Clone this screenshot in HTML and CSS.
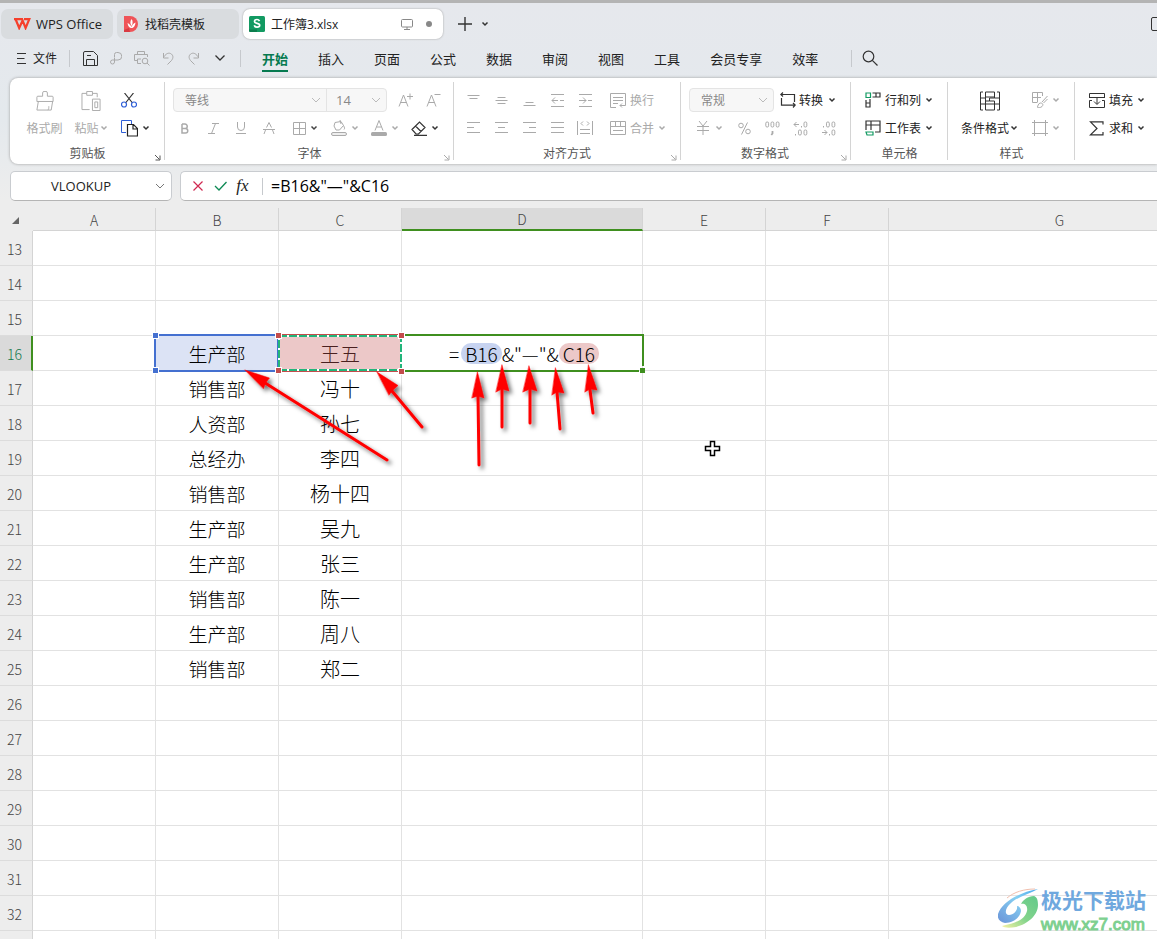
FILE: index.html
```
<!DOCTYPE html>
<html lang="zh-CN">
<head>
<meta charset="utf-8">
<title>工作簿3.xlsx - WPS Office</title>
<link rel="stylesheet" href="styles.css">
</head>
<body>
<svg class="defs" aria-hidden="true">
  <symbol id="caret" viewBox="0 0 8 6"><path d="M1.500 1.500 4 4l2.500-2.500" fill="none" stroke="currentColor" stroke-width="1.500"/></symbol>
  <symbol id="chev" viewBox="0 0 10 6"><path d="M1 1l4 4 4-4" fill="none" stroke="currentColor"/></symbol>
  <symbol id="corner" viewBox="0 0 7 7"><path d="M1 1l4.500 4.500M6 1.500V6H1.500" fill="none" stroke="currentColor"/></symbol>
</svg>

<header class="tabs">
  <button class="tab tab-home">
    <svg width="17" height="12" viewBox="0 0 17 12"><path d="M0 1.200h9M1.500 1l3.700 9L8.600 2.500 11.600 10 15.300 1.200H10" fill="none" stroke="#f5402c" stroke-width="2.200"/></svg>
    WPS Office
  </button>
  <button class="tab tab-store">
    <svg width="14" height="16" viewBox="0 0 14 16"><path d="M0 0h6a8 8 0 0 1 0 16H0z" fill="#ef5458"/><path d="M0 14l5-2 1 4H0z" fill="#d93a42"/><path d="M7.500 3c1.500 2 1.500 4.500 0 7C6 8 6 5 7.500 3z" fill="#fff"/><path d="M3.500 7c2 1 3 2 4 4 .8-2.500 2-3.500 4-4.500-.5 4-2 5.500-4 5.500S4 10.500 3.500 7z" fill="#fff"/></svg>
    找稻壳模板
  </button>
  <button class="tab tab-file">
    <svg width="16" height="16" viewBox="0 0 16 16"><rect width="16" height="16" rx="1.500" fill="#129a62"/><path d="M0 13.500h8V16H1.500A1.500 1.500 0 0 1 0 14.500z" fill="#0b7d4d"/><path d="M10.500 5.200C10 4 9.200 3.500 8 3.500c-1.500 0-2.500.7-2.500 1.900C5.500 8 10.700 6.700 10.700 9.300c0 1.200-1.100 1.900-2.600 1.900S5.600 10.500 5.300 9.300" fill="none" stroke="#fff" stroke-width="1.700"/></svg>
    <span class="file-name">工作簿3.xlsx</span>
    <svg width="12" height="11" viewBox="0 0 12 11" fill="none" stroke="#888"><rect x=".5" y=".5" width="11" height="7.500" rx="1"/><path d="M6 8v2M3 10.500h6"/></svg>
    <i class="dot"></i>
  </button>
  <button class="ic add" aria-label="新建"><svg width="14" height="14" viewBox="0 0 14 14"><path d="M7 0v14M0 7h14" stroke="#333" stroke-width="1.400"/></svg></button>
  <button class="ic" aria-label="标签列表"><svg class="caret"><use href="#caret"/></svg></button>
  <button class="ic edge" aria-label="窗口"><svg width="14" height="14" viewBox="0 0 14 14"><rect x=".5" y=".5" width="13" height="13" rx="1.500" fill="none" stroke="#333"/></svg></button>
</header>

<nav class="menu">
  <button class="file-btn"><svg width="9" height="11" viewBox="0 0 9 11"><path d="M0 .5h9M0 5.500h7.500M0 10.500h9" stroke="#333"/></svg>文件</button>
  <i class="sep"></i>
  <div class="quick">
    <button class="ic" aria-label="保存"><svg width="15" height="15" viewBox="0 0 15 15" fill="none" stroke="#333"><path d="M2 .5h8.500l4 4v10H.5V2A1.500 1.500 0 0 1 2 .5zM3.500 14.500v-6h8v6M4 4.500h4"/></svg></button>
    <button class="ic off" aria-label="输出"><svg width="12" height="13" viewBox="0 0 12 13" fill="none" stroke="currentColor"><path d="M4.500 5V2.500a2 2 0 0 1 2-2H8a3.500 3.500 0 0 1 0 7.500H2.500a2 2 0 1 0 2 2V5.500"/></svg></button>
    <button class="ic off" aria-label="打印预览"><svg width="16" height="15" viewBox="0 0 16 15" fill="none" stroke="currentColor"><path d="M3.500 3.500v-3h7v3M3.500 9.500h-3v-6h13V6M7 12.500H3.500V8H7"/><circle cx="11" cy="10" r="2.800"/><path d="M13 12l2.500 2.500"/></svg></button>
    <button class="ic off" aria-label="撤销"><svg width="12" height="13" viewBox="0 0 12 13" fill="none" stroke="currentColor"><path d="M1.500 1v5h5M1.500 5.500C3.500 2 6 .5 8.500 1.500c3 1.500 3 4.500 1 7L5.500 12.500"/></svg></button>
    <button class="ic off" aria-label="恢复"><svg width="12" height="13" viewBox="0 0 12 13" fill="none" stroke="currentColor"><path d="M10.500 1v5h-5M10.500 5.500C8.500 2 6 .5 3.500 1.500c-3 1.500-3 4.500-1 7l4 4"/></svg></button>
    <button class="ic" aria-label="更多"><svg width="10" height="6" viewBox="0 0 10 6"><path d="M.5.500 5 5 9.500.500" fill="none" stroke="#333" stroke-width="1.300"/></svg></button>
  </div>
  <i class="sep"></i>
  <div class="menu-items">
    <a class="active" href="#">开始</a><a href="#">插入</a><a href="#">页面</a><a href="#">公式</a><a href="#">数据</a><a href="#">审阅</a><a href="#">视图</a><a href="#">工具</a><a href="#">会员专享</a><a href="#">效率</a>
  </div>
  <i class="sep"></i>
  <button class="ic search" aria-label="搜索"><svg width="16" height="16" viewBox="0 0 16 16" fill="none" stroke="#333" stroke-width="1.200"><circle cx="6.500" cy="6.500" r="5.300"/><path d="M10.300 10.300 15.500 15.500"/></svg></button>
</nav>

<section class="ribbon">
  <div class="group g-clip">
    <div class="tools">
      <button class="big off"><svg width="20" height="21" viewBox="0 0 20 21" fill="none" stroke="currentColor"><path d="M1.500 11V6.500a1 1 0 0 1 1-1h5V2a1.500 1.500 0 0 1 1.500-1.500h2A1.500 1.500 0 0 1 12.500 2v3.500h5a1 1 0 0 1 1 1V11zM3 11l-1.500 9h15l1.500-9M13 20c1-1 1-2 1-4"/></svg><span>格式刷</span></button>
      <button class="big off"><svg width="21" height="21" viewBox="0 0 21 21" fill="none" stroke="currentColor"><path d="M5.500 2.500h-5v17h8M11.500 2.500h5v4M5.500.5h6v4h-6zM11.500 8.500h8v12h-8zM14 11.500h3v6h-3z"/></svg><span>粘贴<svg class="caret"><use href="#caret"/></svg></span></button>
      <div class="col">
        <button class="tool" aria-label="剪切"><svg width="16" height="15" viewBox="0 0 16 15" fill="none"><path d="M3.500 0l8 10M12.500 0l-8 10" stroke="#333" stroke-width="1.200"/><circle cx="3" cy="11.500" r="2.500" stroke="#2f5fd8" stroke-width="1.200"/><circle cx="13" cy="11.500" r="2.500" stroke="#2f5fd8" stroke-width="1.200"/></svg></button>
        <button class="tool" aria-label="复制"><svg width="17" height="17" viewBox="0 0 17 17" fill="none"><path d="M5 12.500H.5V.5h10V4" stroke="#2f5fd8"/><path d="M6.500 4.500h6l4 4v7.500h-10zM12 5v4h4" stroke="#222" stroke-width="1.200"/></svg><svg class="caret"><use href="#caret"/></svg></button>
      </div>
    </div>
    <div class="label">剪贴板<svg class="corner"><use href="#corner"/></svg></div>
  </div>

  <div class="group g-font">
    <div class="row">
      <div class="combo">
        <label class="pick font-name"><select aria-label="字体"><option>等线</option></select><svg class="chev"><use href="#chev"/></svg></label>
        <label class="pick font-size"><select aria-label="字号"><option>14</option></select><svg class="chev"><use href="#chev"/></svg></label>
      </div>
      <button class="cell off" aria-label="增大字号"><svg width="15" height="14" viewBox="0 0 15 14" fill="none" stroke="currentColor"><path d="M1 13.500 5.500 2 10 13.500M2.500 9.500h6M9 3.500h6M12 .5v6"/></svg></button>
      <button class="cell off" aria-label="减小字号"><svg width="15" height="14" viewBox="0 0 15 14" fill="none" stroke="currentColor"><path d="M1 13.500 5.500 2 10 13.500M2.500 9.500h6M8.500 1.500h6"/></svg></button>
    </div>
    <div class="row">
      <button class="cell off" aria-label="加粗"><svg width="8" height="11" viewBox="0 0 8 11" fill="none" stroke="currentColor" stroke-width="1.500"><path d="M1 1v9h3.500a2.200 2.200 0 0 0 0-4.500H1M1 1h3a2.200 2.200 0 0 1 0 4.500"/></svg></button>
      <button class="cell off" aria-label="倾斜"><svg width="11" height="11" viewBox="0 0 11 11" fill="none" stroke="currentColor"><path d="M4 .5h7M0 10.500h7M7.500.500l-4 10"/></svg></button>
      <button class="cell off" aria-label="下划线"><svg width="10" height="12" viewBox="0 0 10 12" fill="none" stroke="currentColor"><path d="M1.500 0v5a3.500 3.500 0 0 0 7 0V0M0 11.500h10"/></svg></button>
      <button class="cell off" aria-label="删除线"><svg width="12" height="12" viewBox="0 0 12 12" fill="none" stroke="currentColor"><path d="M0 7.500h12M3.500 5.500 6 .5l2.500 5M2.500 8 1 12M9.500 8l1.500 4"/></svg></button>
      <button class="wide off" aria-label="边框"><svg width="13" height="13" viewBox="0 0 13 13" fill="none" stroke="currentColor"><path d="M.5.5h12v12H.5zM6.500 0v13M0 6.500h13"/></svg><svg class="caret dark"><use href="#caret"/></svg></button>
      <button class="wide off" aria-label="填充颜色"><svg width="16" height="16" viewBox="0 0 16 16" fill="none" stroke="currentColor"><path d="M4 2.500l6-1 2.500 4-4 4.500H5L3 6zM9 0l1 4M12.500 5.500c1 2 1.500 3 .5 4"/><rect x=".5" y="12.500" width="15" height="3" rx="1.500" fill="#eee"/></svg><svg class="caret"><use href="#caret"/></svg></button>
      <button class="wide off" aria-label="字体颜色"><svg width="16" height="16" viewBox="0 0 16 16" fill="none" stroke="currentColor"><path d="M4 10.500 8 .5l4 10M5.500 7h5"/><rect y="12" width="16" height="4" rx="1.500" fill="currentColor" stroke="none"/></svg><svg class="caret"><use href="#caret"/></svg></button>
      <button class="wide" aria-label="清除"><svg width="16" height="15" viewBox="0 0 16 15" fill="none" stroke="#333" stroke-width="1.200"><path d="M1 8.500 8.500 1 14 6.500 7.500 13H5zM4.500 5l5.500 5.500M3 14.300h13"/></svg><svg class="caret"><use href="#caret"/></svg></button>
    </div>
    <div class="label">字体<svg class="corner off"><use href="#corner"/></svg></div>
  </div>

  <div class="group g-align">
    <div class="row">
      <button class="cell off" aria-label="顶端对齐"><svg width="13" height="13" viewBox="0 0 13 13" stroke="currentColor"><path d="M.5 1.500h12M2.500 4.500h8"/></svg></button>
      <button class="cell off" aria-label="垂直居中"><svg width="13" height="13" viewBox="0 0 13 13" stroke="currentColor"><path d="M2.500 3.500h8M.5 6.500h12M2.500 9.500h8"/></svg></button>
      <button class="cell off" aria-label="底端对齐"><svg width="13" height="13" viewBox="0 0 13 13" stroke="currentColor"><path d="M2.500 8.500h8M.5 11.500h12"/></svg></button>
      <button class="cell off" aria-label="减少缩进"><svg width="13" height="13" viewBox="0 0 13 13" fill="none" stroke="currentColor"><path d="M0 .5h13M0 12.500h13M1 6.500h6M4 3.500l-3 3 3 3M9 6.500h4"/></svg></button>
      <button class="cell off" aria-label="增加缩进"><svg width="13" height="13" viewBox="0 0 13 13" fill="none" stroke="currentColor"><path d="M0 .5h13M0 12.500h13M0 6.500h7M4 3.500l3 3-3 3M9 6.500h4"/></svg></button>
      <button class="text off"><svg width="16" height="15" viewBox="0 0 16 15" fill="none" stroke="currentColor"><path d="M6 14.500H.5V.5h15V9M3 4.500h10M3 7.500h10M3 10.500h5M15.500 9v3.500H10M12 10.500l-2 2 2 2"/></svg>换行</button>
    </div>
    <div class="row">
      <button class="cell off" aria-label="左对齐"><svg width="13" height="12" viewBox="0 0 13 12" stroke="currentColor"><path d="M0 .5h13M0 5.500h7M0 10.500h13"/></svg></button>
      <button class="cell off" aria-label="居中"><svg width="13" height="12" viewBox="0 0 13 12" stroke="currentColor"><path d="M0 .5h13M3 5.500h7M0 10.500h13"/></svg></button>
      <button class="cell off" aria-label="右对齐"><svg width="13" height="12" viewBox="0 0 13 12" stroke="currentColor"><path d="M0 .5h13M6 5.500h7M0 10.500h13"/></svg></button>
      <button class="cell off" aria-label="两端对齐"><svg width="13" height="12" viewBox="0 0 13 12" stroke="currentColor"><path d="M0 .5h13M0 5.500h13M0 10.500h13"/></svg></button>
      <button class="cell off" aria-label="分散对齐"><svg width="16" height="14" viewBox="0 0 16 14" fill="none" stroke="currentColor"><path d="M.5 0v14M15.500 0v14M6 .5l-2 2 2 2M10 .5l2 2-2 2M3 8.500h10M3 12.500h10"/></svg></button>
      <button class="text off"><svg width="16" height="14" viewBox="0 0 16 14" fill="none" stroke="currentColor"><path d="M.5.5h15v13H.5zM.5 5.500h15M5.500.5v5M10.500.5v5M3 9.500h10"/></svg>合并<svg class="caret"><use href="#caret"/></svg></button>
    </div>
    <div class="label">对齐方式<svg class="corner off"><use href="#corner"/></svg></div>
  </div>

  <div class="group g-num">
    <div class="row">
      <label class="pick num-format"><select aria-label="数字格式"><option>常规</option></select><svg class="chev"><use href="#chev"/></svg></label>
      <button class="text"><svg width="16" height="16" viewBox="0 0 16 16" fill="none" stroke="#333" stroke-width="1.200"><path d="M3 .5.800 2.500 3 4.500M1 2.500h13.500V10M13 11l2.200 2-2.200 2.500M15 13.200H1.500V6"/></svg>转换<svg class="caret"><use href="#caret"/></svg></button>
    </div>
    <div class="row">
      <button class="wide off" aria-label="货币"><svg width="12" height="14" viewBox="0 0 12 14" fill="none" stroke="currentColor"><path d="M2 0l4 5 4-5M0 5.500h12M0 9.500h12M6 5v9"/></svg><svg class="caret"><use href="#caret"/></svg></button>
      <button class="cell off" aria-label="百分比"><svg width="13" height="13" viewBox="0 0 13 13" fill="none" stroke="currentColor"><circle cx="3" cy="3.500" r="2.300"/><circle cx="10" cy="9.500" r="2.300"/><path d="M9.500.500l-6 12"/></svg></button>
      <button class="cell off" aria-label="千位分隔"><svg width="15" height="15" viewBox="0 0 15 15" fill="none" stroke="currentColor"><rect x=".8" y="1" width="2.800" height="5" rx="1.200"/><rect x="6" y="1" width="2.800" height="5" rx="1.200"/><rect x="11.200" y="1" width="2.800" height="5" rx="1.200"/><path d="M7.500 10v2.500l-1.200 1.500" stroke-width="1.800"/></svg></button>
      <button class="cell off" aria-label="增加小数位"><svg width="15" height="15" viewBox="0 0 15 15" fill="none" stroke="currentColor"><path d="M3.500 1 1 3.500 3.500 6M1 3.500h5M8.500 5v1.500M2.500 13v1.500"/><rect x="11" y="1" width="2.800" height="5" rx="1.200"/><rect x="5.500" y="9" width="2.800" height="5" rx="1.200"/><rect x="11" y="9" width="2.800" height="5" rx="1.200"/></svg></button>
      <button class="cell off" aria-label="减少小数位"><svg width="15" height="15" viewBox="0 0 15 15" fill="none" stroke="currentColor"><path d="M3.500 9 6 11.500 3.500 14M1 11.500h5M8.500 13v1.500M2.500 5v1.500"/><rect x="5.500" y="1" width="2.800" height="5" rx="1.200"/><rect x="11" y="1" width="2.800" height="5" rx="1.200"/><rect x="11" y="9" width="2.800" height="5" rx="1.200"/></svg></button>
    </div>
    <div class="label">数字格式<svg class="corner off"><use href="#corner"/></svg></div>
  </div>

  <div class="group g-cells">
    <div class="row"><button class="text"><svg width="16" height="16" viewBox="0 0 16 16" fill="none" stroke="#333" stroke-width="1.200"><path d="M7.500 1H15v4H7.500M11 1v4M1 8v7h4V7M1 11h4"/><path d="M1 1h4.500v4.500H1z" stroke="#129a62"/></svg>行和列<svg class="caret"><use href="#caret"/></svg></button></div>
    <div class="row"><button class="text"><svg width="16" height="16" viewBox="0 0 16 16" fill="none" stroke="#333" stroke-width="1.200"><path d="M1 10V1h14v11h-5M1 5h14M6 1v9"/><path d="M1 12h7v3H2z" stroke="#129a62"/></svg>工作表<svg class="caret"><use href="#caret"/></svg></button></div>
    <div class="label">单元格</div>
  </div>

  <div class="group g-style">
    <div class="tools">
      <button class="big"><svg width="20" height="19" viewBox="0 0 20 19" fill="none" stroke="#333"><path d="M3 .5H.5v18H3M17 .5h2.500v18H17M5.500.5h9v5h-9zM5.500 12.500h9v6h-9zM5.500 5.500v7M9.500 9.500h-4M14.500 5.500v1h-5v3h5v3M.5 6.500h5M.5 12.500h5M14.500 12.500h5M14.500 6.500h5"/></svg><span>条件格式<svg class="caret"><use href="#caret"/></svg></span></button>
      <div class="col">
        <button class="tool off" aria-label="表格样式"><svg width="16" height="16" viewBox="0 0 16 16" fill="none" stroke="currentColor"><path d="M5 10.500H.5V.5h10V4M.5 5.500H9M5.500.5v10M15.500 4 10 10M15.500 7l-4 4M5 15c1 0 1-4 3.500-4s3 2 1.500 3.500-3.500 1-5 .5z"/></svg><svg class="caret"><use href="#caret"/></svg></button>
        <button class="tool off" aria-label="单元格样式"><svg width="16" height="16" viewBox="0 0 16 16" fill="none" stroke="currentColor"><path d="M0 2.500h16M0 13.500h16M2.500 0v16M13.500 0v16"/></svg><svg class="caret"><use href="#caret"/></svg></button>
      </div>
    </div>
    <div class="label">样式</div>
  </div>

  <div class="group g-edit">
    <div class="row"><button class="text"><svg width="16" height="15" viewBox="0 0 16 15" fill="none" stroke="#333"><path d="M.5 5V.5h15V5M.5 4.500h15M3 7.500H.5v7h15v-7H13M8 5v6M5 8.500l3 3 3-3"/></svg>填充<svg class="caret"><use href="#caret"/></svg></button></div>
    <div class="row"><button class="text"><svg width="16" height="15" viewBox="0 0 16 15" fill="none" stroke="#333" stroke-width="1.200"><path d="M14 3.500V.800H1.500L8 7.500l-6.500 6.300H14V11"/></svg>求和<svg class="caret"><use href="#caret"/></svg></button></div>
  </div>
</section>

<section class="formula-bar">
  <div class="name-box"><input aria-label="名称框" value="VLOOKUP"><svg class="chev"><use href="#chev"/></svg></div>
  <div class="formula">
    <button class="ic" aria-label="取消"><svg width="10" height="10" viewBox="0 0 10 10"><path d="M.5.5l9 9M9.500.500l-9 9" stroke="#d02850" stroke-width="1.200"/></svg></button>
    <button class="ic" aria-label="输入"><svg width="13" height="10" viewBox="0 0 13 10"><path d="M1 5l4 4 7.500-8" fill="none" stroke="#0e8a55" stroke-width="1.300"/></svg></button>
    <button class="ic fx" aria-label="插入函数">fx</button>
    <i class="sep"></i>
    <input class="formula-text" aria-label="编辑栏" value="=B16&amp;&quot;—&quot;&amp;C16">
  </div>
</section>

<main class="sheet">
<table>
<colgroup><col class="c-head"><col class="c"><col class="c"><col class="c"><col class="c-d"><col class="c"><col class="c"><col class="c-g"></colgroup>
<thead><tr><th class="all"><svg width="7" height="7" viewBox="0 0 7 7"><path d="M7 0v7H0z" fill="#666"/></svg></th><th>A</th><th>B</th><th>C</th><th class="on">D</th><th>E</th><th>F</th><th>G</th></tr></thead>
<tbody>
<tr><th>13</th><td></td><td></td><td></td><td></td><td></td><td></td><td></td></tr>
<tr><th>14</th><td></td><td></td><td></td><td></td><td></td><td></td><td></td></tr>
<tr><th>15</th><td></td><td></td><td></td><td></td><td></td><td></td><td></td></tr>
<tr><th class="on">16</th><td></td><td class="dept ref-b">生产部</td><td class="name ref-c">王五</td><td class="edit"><span class="eq">=</span><span class="pill pill-b">B16</span><span>&amp;"—"&amp;</span><span class="pill pill-c">C16</span></td><td></td><td></td><td></td></tr>
<tr><th>17</th><td></td><td class="dept">销售部</td><td class="name">冯十</td><td></td><td></td><td></td><td></td></tr>
<tr><th>18</th><td></td><td class="dept">人资部</td><td class="name">孙七</td><td></td><td></td><td></td><td></td></tr>
<tr><th>19</th><td></td><td class="dept">总经办</td><td class="name">李四</td><td></td><td></td><td></td><td></td></tr>
<tr><th>20</th><td></td><td class="dept">销售部</td><td class="name">杨十四</td><td></td><td></td><td></td><td></td></tr>
<tr><th>21</th><td></td><td class="dept">生产部</td><td class="name">吴九</td><td></td><td></td><td></td><td></td></tr>
<tr><th>22</th><td></td><td class="dept">生产部</td><td class="name">张三</td><td></td><td></td><td></td><td></td></tr>
<tr><th>23</th><td></td><td class="dept">销售部</td><td class="name">陈一</td><td></td><td></td><td></td><td></td></tr>
<tr><th>24</th><td></td><td class="dept">生产部</td><td class="name">周八</td><td></td><td></td><td></td><td></td></tr>
<tr><th>25</th><td></td><td class="dept">销售部</td><td class="name">郑二</td><td></td><td></td><td></td><td></td></tr>
<tr><th>26</th><td></td><td></td><td></td><td></td><td></td><td></td><td></td></tr>
<tr><th>27</th><td></td><td></td><td></td><td></td><td></td><td></td><td></td></tr>
<tr><th>28</th><td></td><td></td><td></td><td></td><td></td><td></td><td></td></tr>
<tr><th>29</th><td></td><td></td><td></td><td></td><td></td><td></td><td></td></tr>
<tr><th>30</th><td></td><td></td><td></td><td></td><td></td><td></td><td></td></tr>
<tr><th>31</th><td></td><td></td><td></td><td></td><td></td><td></td><td></td></tr>
<tr><th>32</th><td></td><td></td><td></td><td></td><td></td><td></td><td></td></tr>
<tr><th></th><td></td><td></td><td></td><td></td><td></td><td></td><td></td></tr>
</tbody>
</table>

<svg class="marks" width="760" height="320" viewBox="0 208 760 320" aria-hidden="true">
  <defs><filter id="shadow" x="-50%" y="-50%" width="200%" height="200%"><feDropShadow dx="3" dy="3" stdDeviation="2" flood-color="#000" flood-opacity=".55"/></filter></defs>
  <rect x="155" y="335" width="123" height="36" fill="none" stroke="#4470d0" stroke-width="2"/>
  <rect x="278.500" y="334.500" width="123" height="37" fill="none" stroke="#c34c4c"/>
  <rect x="279" y="336" width="122" height="34" fill="none" stroke="#fff" stroke-width="2"/>
  <rect x="279" y="336" width="122" height="34" fill="none" stroke="#22b57b" stroke-width="2" stroke-dasharray="8 2"/>
  <path d="M405 335H643v31M405 371H639" fill="none" stroke="#3f8f1f" stroke-width="2"/>
  <rect x="640" y="368" width="5" height="5" fill="#3f8f1f"/>
  <g fill="#4470d0" stroke="#fff"><rect x="152.500" y="332.500" width="6" height="6"/><rect x="152.500" y="367.500" width="6" height="6"/></g>
  <g fill="#c34c4c" stroke="#fff"><rect x="275.500" y="332.500" width="6" height="6"/><rect x="275.500" y="367.500" width="6" height="6"/><rect x="398.500" y="332.500" width="6" height="6"/><rect x="398.500" y="368.500" width="6" height="6"/></g>
  <g filter="url(#shadow)" fill="#f00" stroke="#f00" stroke-linecap="round">
    <g stroke-width="3"><path d="M387 460 262 381M422 427 392 391M479 465 478 396M502 427V390M530 423V390M560 429 557 392M593 413 590 390"/></g>
    <g stroke-width=".5"><path d="M245 370 269.500 378 265.500 383 263.500 388.500zM377 372 398 385.500 393 390 389 395zM477.500 372 484 398 478 396 472 398zM502 365 509 391 502 389 496 392zM529 366 537 391 530 389 523 392zM555.500 368 564 393 557 392 552 395zM588.500 365 597 390 590 389 585 392z"/></g>
  </g>
  <path d="M710.500 441.500h4v5h5v4h-5v5h-4v-5h-5v-4h5z" fill="#fff" stroke="#000" stroke-width="1.500"/>
</svg>

<div class="watermark">
  <svg width="42" height="42" viewBox="0 0 42 42">
    <defs><linearGradient id="wb" x1="1" y1="0" x2="0" y2="1"><stop offset="0" stop-color="#4aa8ee"/><stop offset=".4" stop-color="#86d0f2"/><stop offset="1" stop-color="#6a93d8"/></linearGradient><linearGradient id="wg" x1="1" y1="0" x2="0" y2="1"><stop offset="0" stop-color="#62c98a"/><stop offset=".55" stop-color="#84d48c"/><stop offset="1" stop-color="#f6f2a4"/></linearGradient></defs>
    <path d="M40 1C22 4 4 14 0 26c-1 5 2 8 7 9 9 0 15-6 16-12 0-3-2-5-4-5 1 4-3 9-8 9-5 0-4-7 2-12C18 10 31 6 40 1z" fill="url(#wb)"/>
    <path d="M36 8c-6 0-11 4-13 8 4-1 7 2 6 7-2 8-10 12-25 15 2 2 8 2 14 1 12-3 22-12 22-22 0-5-1-8-4-9z" fill="url(#wg)"/>
    <path d="M9 10C16 4 26 1 37 1" fill="none" stroke="#f0bfae"/>
  </svg>
  <div><div class="wm-name">极光下载站</div><div class="wm-url">www.xz7.com</div></div>
</div>
</main>
</body>
</html>
```

FILE: styles.css
```
* { box-sizing: border-box; }

body {
  margin: 0;
  height: 100vh;
  overflow: hidden;
  display: flex;
  flex-direction: column;
  border-top: 3px solid #b4b4b4;
  background: linear-gradient(#e6e8ed, #e4e9ed 120px, #ededed 200px);
  font-family: "Open Sans", "Noto Sans CJK SC", sans-serif;
  font-size: 12px;
  color: #222;
}

button, input, select {
  font: inherit;
  color: inherit;
  border: 0;
  padding: 0;
  margin: 0;
  background: none;
}

svg { flex: none; display: block; }
.defs { position: absolute; width: 0; height: 0; }
.caret { width: 8px; height: 6px; color: #333; }
.chev { width: 10px; height: 6px; color: #777; }
.corner { width: 7px; height: 7px; color: #555; }
.sep { flex: none; width: 1px; height: 17px; background: #c6c9cd; }
.ic { flex: none; display: flex; align-items: center; justify-content: center; width: 26px; height: 26px; }
.off, .off .caret, .corner.off { color: #aaa; }
.off .caret.dark { color: #444; }

/* Document tabs */
.tabs { flex: none; display: flex; align-items: center; gap: 4px; height: 42px; padding-left: 1px; }
.tab { flex: none; display: flex; align-items: center; height: 30px; border-radius: 7px; background: #d9dcdf; white-space: nowrap; }
.tab-home { width: 112px; padding-left: 13px; gap: 5px; font-size: 13px; }
.tab-store { width: 122px; padding-left: 7px; gap: 7px; }
.tab-file { width: 200px; padding: 0 11px 0 6px; gap: 6px; background: #fff; box-shadow: 0 0 2px #999; }
.tab-file > svg:nth-of-type(2) { margin-right: 3px; }
.file-name { flex: 1; text-align: left; }
.dot { width: 6px; height: 6px; border-radius: 3px; background: #888; margin-left: 4px; }
.add { margin-left: 5px; }
.add + .ic { width: 14px; margin-left: -4px; }
.edge { width: 14px; margin-left: auto; margin-right: -8px; }

/* Menu */
.menu { flex: none; display: flex; align-items: center; height: 28px; padding: 0 0 2px 17px; }
.file-btn { display: flex; align-items: center; gap: 7px; width: 52px; white-space: nowrap; }
.quick { display: flex; width: 170px; padding-left: 7px; }
.menu-items { display: flex; gap: 30px; width: 610px; padding-left: 21px; font-size: 13px; }
.menu-items a { color: inherit; text-decoration: none; white-space: nowrap; line-height: 21px; padding-top: 4px; border-bottom: 2px solid transparent; }
.menu-items .active { color: #067a50; font-weight: bold; border-color: #067a50; }
.search { width: 36px; }

/* Ribbon */
.ribbon { flex: none; display: flex; margin: 5px 0 0 10px; height: 86px; border-radius: 8px 0 0 8px; background: #fff; box-shadow: 0 0 3px #999; }
.group { flex: none; position: relative; padding-top: 8px; }
.group:not(:last-child)::after { content: ""; position: absolute; right: 0; top: 4px; bottom: 4px; width: 1px; background: #d4d4d4; }
.g-clip { width: 155px; }
.g-font { width: 289px; padding-left: 8px; }
.g-align { width: 227px; padding-left: 5px; }
.g-num { width: 170px; padding-left: 8px; }
.g-cells { width: 97px; padding-left: 14px; }
.g-style { width: 127px; }
.g-edit { flex: 1; padding-left: 14px; }
.row { display: flex; align-items: center; height: 28px; }
.tools { display: flex; height: 56px; }
.col { display: flex; flex-direction: column; }
.tool { display: flex; align-items: center; gap: 5px; height: 28px; }
.big { display: flex; flex-direction: column; align-items: center; white-space: nowrap; }
.big > svg { margin-top: 5px; height: 20px; }
.big span { display: flex; align-items: center; gap: 1px; height: 28px; margin-top: 3px; }
.g-clip .tools { padding-left: 16px; }
.g-clip .big { width: 37px; }
.g-clip .big + .big { width: 36px; margin: 0 12px 0 10px; }
.g-clip .tool { gap: 4px; }
.g-style .tools { padding-left: 13px; gap: 14px; }
.g-style .tool { gap: 4px; }
.cell { display: flex; align-items: center; justify-content: center; width: 28px; height: 28px; }
.wide { display: flex; align-items: center; justify-content: center; gap: 4px; width: 40px; height: 28px; }
.g-font .row + .row { margin-left: -2px; }
.g-font .cell + .wide { margin-left: 2px; }
.text { display: flex; align-items: center; gap: 4px; white-space: nowrap; }
.g-align .text { margin-left: 11px; }
.g-num .text { margin-left: 6px; gap: 3px; }
.g-num .text .caret { margin-left: 2px; }
.g-num .wide { width: 41px; gap: 6px; }
.label { display: flex; align-items: center; justify-content: center; height: 22px; color: #555; }
.g-font .label { padding-right: 8px; }
.g-align .label { padding-right: 6px; }
.g-num .label { padding-right: 10px; }
.g-cells .label { padding-right: 14px; }
.corner { position: absolute; right: 4px; bottom: 3px; }

.pick { display: grid; align-items: center; color: #888; }
.pick select { grid-area: 1 / 1; appearance: none; width: 100%; height: 22px; padding-left: 11px; color: #888; opacity: 1; }
.pick .chev { grid-area: 1 / 1; justify-self: end; margin-right: 5px; pointer-events: none; color: #bbb; }
.combo { display: flex; border: 1px solid #e4e4e4; border-radius: 4px; background: #f7f7f7; margin-right: 4px; height: 24px; }
.font-name { width: 152px; }
.font-size { width: 60px; border-left: 1px solid #e4e4e4; }
.font-size select { padding-left: 9px; font-size: 13px; }
.num-format { width: 85px; height: 24px; border: 1px solid #e4e4e4; border-radius: 4px; background: #f7f7f7; }

/* Name box and formula bar */
.formula-bar { flex: none; display: flex; gap: 8px; height: 30px; margin: 7px 0 7px 10px; }
.name-box, .formula { display: flex; align-items: center; background: #fff; border: 1px solid #c9ccd0; border-bottom-color: #b5b5b5; }
.name-box { width: 162px; border-radius: 5px; padding-right: 6px; font-size: 13px; }
.name-box input { flex: 1; min-width: 0; text-align: center; padding-right: 4px; }
.formula { flex: 1; border-right: 0; border-radius: 5px 0 0 5px; padding-left: 6px; }
.formula .ic { width: 22px; }
.formula .fx { font: italic 17px "Liberation Serif", serif; width: 23px; margin-right: 8px; }
.formula-text { flex: 1; min-width: 0; padding-left: 8px; font-size: 16px; color: #000; }

/* Sheet */
.sheet { flex: 1; min-height: 0; position: relative; overflow: hidden; background: #fff; }
table { table-layout: fixed; width: 1231px; border-collapse: separate; border-spacing: 0; font-family: "Noto Sans CJK SC", sans-serif; }
.c-head { width: 33px; }
.c { width: 123px; }
.c-d { width: 241px; }
.c-g { width: 342px; }
th { padding: 2px 0 0; font-size: 14px; font-weight: 300; line-height: 19px; color: #444; background: #ededed; border-right: 1px solid #d4d4d4; }
thead th { height: 23px; border-bottom: 1px solid #d4d4d4; }
thead .all { border-color: #ededed; padding-left: 12px; }
thead .on { background: #dadada; border-bottom: 2px solid #3f8f1f; }
tbody th { height: 35px; padding-right: 3px; border-bottom: 1px solid #dcdcdc; }
tbody .on { background: #dadada; color: #12784e; border-right: 2px solid #3f8f1f; padding-right: 2px; }
td { height: 35px; padding: 2px 0 0; text-align: center; line-height: 30px; border-right: 1px solid #e2e2e2; border-bottom: 1px solid #e2e2e2; color: #000; font-weight: 300; }
.dept { font-size: 19px; }
.name { font-size: 20px; }
.ref-b { background: #dce3f5; }
.ref-c { background: #ecc8c8; color: #4a2020; }
.edit { font-size: 19px; white-space: nowrap; padding-left: 4px; }
.pill { display: inline-block; line-height: 21px; padding: 0 4px; border-radius: 10px; }
.pill-b { background: #c7d3f0; }
.pill-c { background: #ecc8c8; }
.eq { margin-right: 2px; }
.marks { position: absolute; left: 0; top: 0; pointer-events: none; }

.watermark { position: absolute; right: 11px; bottom: 5px; display: flex; align-items: center; gap: 1px; }
.wm-name { font: bold 21px/31px "Noto Sans CJK SC", sans-serif; color: #6fa8de; }
.wm-url { font: 17px/19px "Liberation Sans", sans-serif; color: #7ed090; -webkit-text-stroke: 1px #7ed090; }
```
